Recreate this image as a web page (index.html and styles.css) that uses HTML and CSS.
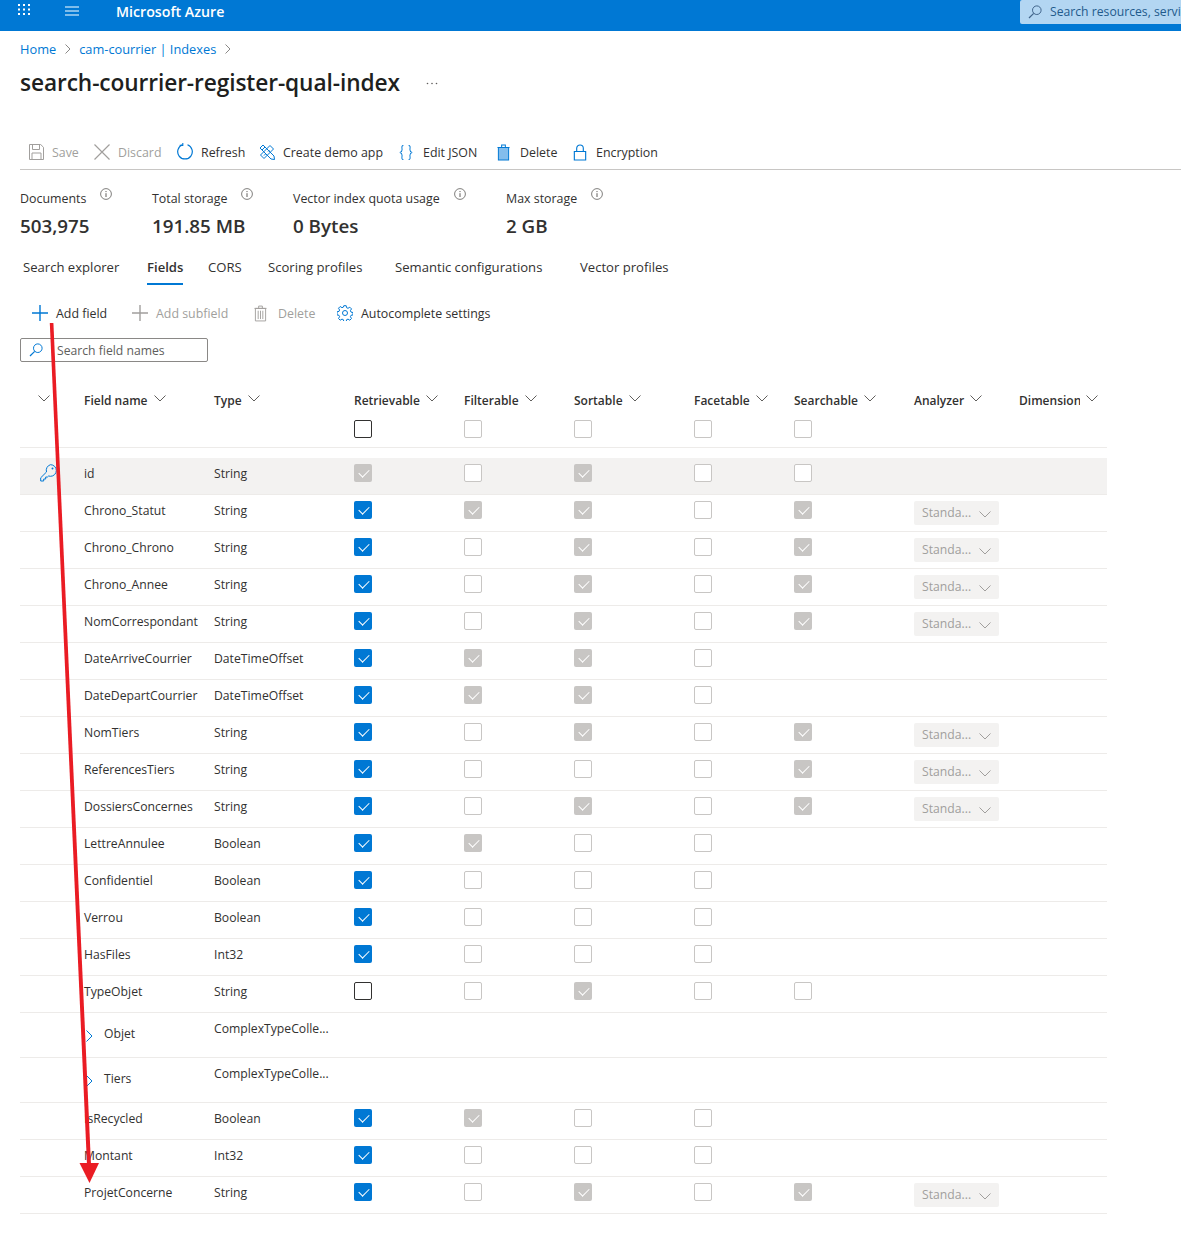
FILE: index.html
```html
<!DOCTYPE html>
<html lang="en">
<head>
<meta charset="utf-8">
<title>search-courrier-register-qual-index - Microsoft Azure</title>
<link rel="stylesheet" href="styles.css">
</head>
<body>
<svg class="sprite" aria-hidden="true">
  <symbol id="chev" viewBox="0 0 12 7"><path d="M.5.5 6 6 11.500.5" fill="none" stroke="currentColor"/></symbol>
  <symbol id="search" viewBox="0 0 14 14"><circle cx="8.800" cy="5.200" r="4.300" fill="none" stroke="currentColor"/><path d="M5.700 8.300 1 13" fill="none" stroke="currentColor" stroke-width="1.200"/></symbol>
  <symbol id="info" viewBox="0 0 12 12"><circle cx="6" cy="6" r="5.400" fill="none" stroke="currentColor" stroke-width=".8"/><path d="M6 5.200V9M6 3v1.100" fill="none" stroke="currentColor"/></symbol>
  <symbol id="plus" viewBox="0 0 18 18"><path d="M9 1v16M1 9h16" fill="none" stroke="currentColor" stroke-width="1.400"/></symbol>
  <symbol id="trash" viewBox="0 0 14 18"><path d="M1.500 3.500h11V17h-11zM.5 3.500h13M5 3.500V1h4v2.500" fill="none" stroke="currentColor"/><path d="M4.500 6v9M7 6v9M9.500 6v9" fill="none" stroke="currentColor"/></symbol>
</svg>

<header class="topbar">
  <svg class="waffle" width="12" height="11" viewBox="0 0 12 11"><g fill="#fff"><rect width="2" height="2"/><rect x="5" width="2" height="2"/><rect x="10" width="2" height="2"/><rect y="4.500" width="2" height="2"/><rect x="5" y="4.500" width="2" height="2"/><rect x="10" y="4.500" width="2" height="2"/><rect y="9" width="2" height="2"/><rect x="5" y="9" width="2" height="2"/><rect x="10" y="9" width="2" height="2"/></g></svg>
  <svg class="burger" width="14" height="10" viewBox="0 0 14 10"><path d="M0 1h14M0 5h14M0 9h14" stroke="#a9d3f2" stroke-width="1.600"/></svg>
  <span class="brand">Microsoft Azure</span>
  <div class="globalsearch">
    <svg class="gs-icon"><use href="#search"/></svg>
    <span class="gs-text">Search resources, services, and docs (G+/)</span>
  </div>
</header>

<main class="page">
  <nav class="crumbs">
    <a>Home</a><svg class="crumb-sep" width="6" height="10" viewBox="0 0 6 10"><path d="M.5.500 5 5 .5 9.500" fill="none" stroke="#8a8886"/></svg>
    <a>cam-courrier | Indexes</a><svg class="crumb-sep" width="6" height="10" viewBox="0 0 6 10"><path d="M.5.500 5 5 .5 9.500" fill="none" stroke="#8a8886"/></svg>
  </nav>
  <div class="titlerow">
    <h1>search-courrier-register-qual-index</h1>
    <svg class="more" width="12" height="3" viewBox="0 0 12 3" aria-label="More"><g fill="#605e5c"><circle cx="1.500" cy="1.500" r=".8"/><circle cx="6" cy="1.500" r=".8"/><circle cx="10.500" cy="1.500" r=".8"/></g></svg>
  </div>

  <div class="toolbar">
    <span class="tool off"><svg width="15" height="16" viewBox="0 0 15 16"><path d="M.5.500h11.200l2.800 2.800v12.200H.5zM3.500.500v5h7v-5M3 15.500V9h9v6.500" fill="none" stroke="#a19f9d"/></svg>Save</span>
    <span class="tool off"><svg width="16" height="16" viewBox="0 0 16 16"><path d="M.5.500l15 15M15.500.500l-15 15" fill="none" stroke="#a19f9d" stroke-width="1.200"/></svg>Discard</span>
    <span class="tool"><svg width="16" height="18" viewBox="0 1.500 16 18"><path d="M5.500 3.300A7.300 7.300 0 1 0 10.500 3.300" fill="none" stroke="#0078d4" stroke-width="1.200"/><path d="M5.800.500v3.400H2.700" fill="none" stroke="#0078d4" stroke-width="1.100"/></svg>Refresh</span>
    <span class="tool"><svg width="16" height="16" viewBox="0 0 16 16" fill="none" stroke="#0078d4"><path d="M1 4 4 1l11 11 .5 3.500-3.500-.5zM3 6l3-3"/><path d="M11 1.500 14.500 5 5 14.500 1.500 11zM5 11.500l1.500-1.500M9 7.500l1.500-1.500"/></svg>Create demo app</span>
    <span class="tool brace"><svg width="14" height="15" viewBox="0 0 16 16" preserveAspectRatio="none" fill="none" stroke="#0078d4" stroke-width="1.100"><path d="M5 .5C2.500.5 3.500 3 3.500 5S3 7.500 1 8c2 .5 2.500 1 2.500 3s-1 4.500 1.500 4.500M11 .5c2.500 0 1.500 2.500 1.500 4.500s.5 2.500 2.500 3c-2 .5-2.500 1-2.500 3s1 4.500-1.500 4.500"/></svg>Edit JSON</span>
    <span class="tool trashbtn"><svg width="13" height="17" viewBox="0 0 14 18"><rect x="2" y="4" width="10" height="13" fill="#83bdec"/><path d="M1.500 3.500h11V17h-11zM.5 3.500h13M5 3.500V1h4v2.500" fill="none" stroke="#0078d4" stroke-width="1.100"/></svg>Delete</span>
    <span class="tool lock"><svg width="14" height="17" viewBox="0 0 14 18" fill="none" stroke="#0078d4" stroke-width="1.200"><path d="M1 8h12v9H1zM3.500 8V4.500a3.500 3.500 0 0 1 7 0V8"/></svg>Encryption</span>
  </div>

  <section class="stats">
    <div><div class="stat-label">Documents<svg class="info"><use href="#info"/></svg></div><div class="stat-value">503,975</div></div>
    <div><div class="stat-label">Total storage<svg class="info"><use href="#info"/></svg></div><div class="stat-value">191.85 MB</div></div>
    <div><div class="stat-label">Vector index quota usage<svg class="info"><use href="#info"/></svg></div><div class="stat-value">0 Bytes</div></div>
    <div><div class="stat-label">Max storage<svg class="info"><use href="#info"/></svg></div><div class="stat-value">2 GB</div></div>
  </section>

  <nav class="tabs">
    <span class="tab">Search explorer</span>
    <span class="tab active">Fields</span>
    <span class="tab">CORS</span>
    <span class="tab">Scoring profiles</span>
    <span class="tab">Semantic configurations</span>
    <span class="tab">Vector profiles</span>
  </nav>

  <div class="subtools">
    <span class="tool"><svg class="blue" width="18" height="18"><use href="#plus"/></svg>Add field</span>
    <span class="tool off"><svg class="grey" width="18" height="18"><use href="#plus"/></svg>Add subfield</span>
    <span class="tool off trashoff"><svg class="grey" width="13" height="17"><use href="#trash"/></svg>Delete</span>
    <span class="tool gear"><svg width="16" height="16" viewBox="0 0 16 16" fill="none" stroke="#0078d4"><circle cx="8" cy="8" r="2.500"/><path d="M6.800.7h2.400l.4 2 1.400.6 1.800-1.100 1.700 1.700-1.100 1.800.6 1.400 2 .4v2.400l-2 .4-.6 1.400 1.100 1.800-1.700 1.700-1.800-1.100-1.400.6-.4 2H6.800l-.4-2-1.400-.6-1.800 1.100-1.700-1.700 1.100-1.800-.6-1.400-2-.4V6.800l2-.4.6-1.400-1.100-1.800 1.700-1.700L5 2.700l1.400-.6z"/></svg>Autocomplete settings</span>
  </div>

  <div class="fieldsearch">
    <svg class="fs-icon"><use href="#search"/></svg>
    <span>Search field names</span>
  </div>

  <section class="fields">
    <div class="thead">
      <div class="th"><svg class="chev"><use href="#chev"/></svg></div>
      <div class="th"><span>Field name</span><svg class="chev"><use href="#chev"/></svg></div>
      <div class="th"><span>Type</span><svg class="chev"><use href="#chev"/></svg></div>
      <div class="th"><span>Retrievable</span><svg class="chev"><use href="#chev"/></svg></div>
      <div class="th"><span>Filterable</span><svg class="chev"><use href="#chev"/></svg></div>
      <div class="th"><span>Sortable</span><svg class="chev"><use href="#chev"/></svg></div>
      <div class="th"><span>Facetable</span><svg class="chev"><use href="#chev"/></svg></div>
      <div class="th"><span>Searchable</span><svg class="chev"><use href="#chev"/></svg></div>
      <div class="th"><span>Analyzer</span><svg class="chev"><use href="#chev"/></svg></div>
      <div class="th"><span class="clip">Dimension</span><svg class="chev"><use href="#chev"/></svg></div>
      <div></div><div></div><div></div>
      <div><i class="cb dark"></i></div><div><i class="cb"></i></div><div><i class="cb"></i></div><div><i class="cb"></i></div><div><i class="cb"></i></div><div></div><div></div>
    </div>

    <div class="row key">
      <div><svg class="keyicon" width="17" height="18" viewBox="0 0 17 18" fill="none" stroke="#0078d4"><path d="M10.500.7a5.800 5.800 0 0 1 0 11.600c-.7 0-1.300-.1-1.900-.3L7.500 13H5.700v2H3.700v2H.7v-3.200L6.500 8a5.800 5.800 0 0 1 4-7.300z"/><circle cx="12.500" cy="4.500" r="1" fill="#0078d4" stroke="none"/></svg></div>
      <div>id</div><div>String</div>
      <div><i class="cb dis"></i></div><div><i class="cb"></i></div><div><i class="cb dis"></i></div><div><i class="cb"></i></div><div><i class="cb"></i></div><div></div><div></div>
    </div>
    <div class="row"><div></div><div>Chrono_Statut</div><div>String</div><div><i class="cb on"></i></div><div><i class="cb dis"></i></div><div><i class="cb dis"></i></div><div><i class="cb"></i></div><div><i class="cb dis"></i></div><div><span class="drop">Standa...<svg class="chev"><use href="#chev"/></svg></span></div><div></div></div>
    <div class="row"><div></div><div>Chrono_Chrono</div><div>String</div><div><i class="cb on"></i></div><div><i class="cb"></i></div><div><i class="cb dis"></i></div><div><i class="cb"></i></div><div><i class="cb dis"></i></div><div><span class="drop">Standa...<svg class="chev"><use href="#chev"/></svg></span></div><div></div></div>
    <div class="row"><div></div><div>Chrono_Annee</div><div>String</div><div><i class="cb on"></i></div><div><i class="cb"></i></div><div><i class="cb dis"></i></div><div><i class="cb"></i></div><div><i class="cb dis"></i></div><div><span class="drop">Standa...<svg class="chev"><use href="#chev"/></svg></span></div><div></div></div>
    <div class="row"><div></div><div>NomCorrespondant</div><div>String</div><div><i class="cb on"></i></div><div><i class="cb"></i></div><div><i class="cb dis"></i></div><div><i class="cb"></i></div><div><i class="cb dis"></i></div><div><span class="drop">Standa...<svg class="chev"><use href="#chev"/></svg></span></div><div></div></div>
    <div class="row"><div></div><div>DateArriveCourrier</div><div>DateTimeOffset</div><div><i class="cb on"></i></div><div><i class="cb dis"></i></div><div><i class="cb dis"></i></div><div><i class="cb"></i></div><div></div><div></div><div></div></div>
    <div class="row"><div></div><div>DateDepartCourrier</div><div>DateTimeOffset</div><div><i class="cb on"></i></div><div><i class="cb dis"></i></div><div><i class="cb dis"></i></div><div><i class="cb"></i></div><div></div><div></div><div></div></div>
    <div class="row"><div></div><div>NomTiers</div><div>String</div><div><i class="cb on"></i></div><div><i class="cb"></i></div><div><i class="cb dis"></i></div><div><i class="cb"></i></div><div><i class="cb dis"></i></div><div><span class="drop">Standa...<svg class="chev"><use href="#chev"/></svg></span></div><div></div></div>
    <div class="row"><div></div><div>ReferencesTiers</div><div>String</div><div><i class="cb on"></i></div><div><i class="cb"></i></div><div><i class="cb"></i></div><div><i class="cb"></i></div><div><i class="cb dis"></i></div><div><span class="drop">Standa...<svg class="chev"><use href="#chev"/></svg></span></div><div></div></div>
    <div class="row"><div></div><div>DossiersConcernes</div><div>String</div><div><i class="cb on"></i></div><div><i class="cb"></i></div><div><i class="cb dis"></i></div><div><i class="cb"></i></div><div><i class="cb dis"></i></div><div><span class="drop">Standa...<svg class="chev"><use href="#chev"/></svg></span></div><div></div></div>
    <div class="row"><div></div><div>LettreAnnulee</div><div>Boolean</div><div><i class="cb on"></i></div><div><i class="cb dis"></i></div><div><i class="cb"></i></div><div><i class="cb"></i></div><div></div><div></div><div></div></div>
    <div class="row"><div></div><div>Confidentiel</div><div>Boolean</div><div><i class="cb on"></i></div><div><i class="cb"></i></div><div><i class="cb"></i></div><div><i class="cb"></i></div><div></div><div></div><div></div></div>
    <div class="row"><div></div><div>Verrou</div><div>Boolean</div><div><i class="cb on"></i></div><div><i class="cb"></i></div><div><i class="cb"></i></div><div><i class="cb"></i></div><div></div><div></div><div></div></div>
    <div class="row"><div></div><div>HasFiles</div><div>Int32</div><div><i class="cb on"></i></div><div><i class="cb"></i></div><div><i class="cb"></i></div><div><i class="cb"></i></div><div></div><div></div><div></div></div>
    <div class="row"><div></div><div>TypeObjet</div><div>String</div><div><i class="cb dark"></i></div><div><i class="cb"></i></div><div><i class="cb dis"></i></div><div><i class="cb"></i></div><div><i class="cb"></i></div><div></div><div></div></div>
    <div class="row complex"><div></div><div class="cname"><svg class="expand" width="7" height="12" viewBox="0 0 7 12"><path d="M.5.500 6 6 .5 11.500" fill="none" stroke="#0078d4"/></svg>Objet</div><div class="ctype">ComplexTypeColle...</div><div></div><div></div><div></div><div></div><div></div><div></div><div></div></div>
    <div class="row complex"><div></div><div class="cname"><svg class="expand" width="7" height="12" viewBox="0 0 7 12"><path d="M.5.500 6 6 .5 11.500" fill="none" stroke="#0078d4"/></svg>Tiers</div><div class="ctype">ComplexTypeColle...</div><div></div><div></div><div></div><div></div><div></div><div></div><div></div></div>
    <div class="row"><div></div><div>IsRecycled</div><div>Boolean</div><div><i class="cb on"></i></div><div><i class="cb dis"></i></div><div><i class="cb"></i></div><div><i class="cb"></i></div><div></div><div></div><div></div></div>
    <div class="row"><div></div><div>Montant</div><div>Int32</div><div><i class="cb on"></i></div><div><i class="cb"></i></div><div><i class="cb"></i></div><div><i class="cb"></i></div><div></div><div></div><div></div></div>
    <div class="row"><div></div><div>ProjetConcerne</div><div>String</div><div><i class="cb on"></i></div><div><i class="cb"></i></div><div><i class="cb dis"></i></div><div><i class="cb"></i></div><div><i class="cb dis"></i></div><div><span class="drop">Standa...<svg class="chev"><use href="#chev"/></svg></span></div><div></div></div>
  </section>
</main>

<svg class="annotation" width="1181" height="1243" viewBox="0 0 1181 1243" aria-hidden="true">
  <path d="M49.800 323h3.600L91 1165h-4z" fill="#ea1c24"/>
  <path d="M79.500 1163h19.500l-9.500 20z" fill="#ea1c24"/>
</svg>
</body>
</html>
```
FILE: styles.css
```css
* { box-sizing: border-box; }
html, body { margin: 0; padding: 0; }
body {
  width: 1181px;
  height: 1243px;
  position: relative;
  overflow: hidden;
  background: #fff;
  color: #323130;
  font-family: "Open Sans", "Noto Sans", "Liberation Sans", sans-serif;
  font-size: 12.2px;
  line-height: 18px;
}
.sprite { position: absolute; width: 0; height: 0; }

.topbar {
  height: 31px;
  background: #0078d4;
  display: flex;
  align-items: flex-start;
  overflow: hidden;
}
.waffle { margin: 4px 0 0 18px; flex: none; }
.burger { margin: 6px 0 0 35px; flex: none; }
.brand { margin: 3px 0 0 37px; color: #fff; font-size: 14.200px; font-weight: 600; white-space: nowrap; }
.globalsearch {
  margin-left: auto;
  width: 161px;
  height: 24px;
  background: #b3d6f2;
  border-radius: 2px 0 0 2px;
  display: flex;
  align-items: center;
  padding-left: 8px;
  overflow: hidden;
  flex: none;
}
.gs-icon { width: 14px; height: 14px; color: #40648a; flex: none; }
.gs-text { margin-left: 8px; color: #1f5a8c; white-space: nowrap; }

.page { padding-left: 20px; }
.crumbs { margin-top: 9px; height: 18px; display: flex; align-items: center; color: #0078d4; font-size: 12.800px; }
.crumb-sep { margin: 0 8px 0 9px; }
.titlerow { margin-top: 9px; height: 32px; display: flex; align-items: center; }
h1 { margin: 0; font-size: 22.700px; line-height: 32px; font-weight: 600; color: #201f1e; letter-spacing: -.1px; white-space: nowrap; }
.more { margin: 0 0 0 26px; flex: none; }

.toolbar {
  margin-top: 36px;
  height: 35px;
  padding: 0 0 0 9px;
  display: grid;
  grid-template-columns: 65px 83px 82px 140px 98px 76px 1fr;
  align-items: center;
  border-bottom: 1px solid #c8c6c4;
  font-size: 12.400px;
}
.tool { display: flex; align-items: center; gap: 8px; white-space: nowrap; padding-top: 2px; }
.tool svg { flex: none; margin-top: -2px; }
.tool.off { color: #a19f9d; }
.tool.brace { gap: 10px; }
.tool.trashbtn { gap: 10px; }
.tool.lock { gap: 9px; }

.stats {
  margin-top: 19px;
  display: grid;
  grid-template-columns: 132px 141px 213px 1fr;
  font-size: 12.400px;
}
.stat-label { display: flex; height: 18px; line-height: 20px; white-space: nowrap; }
.info { width: 12px; height: 12px; margin: -1px 0 0 14px; color: #605e5c; }
.stat-value { margin-top: 5px; height: 28px; font-size: 18.800px; line-height: 28px; font-weight: 600; white-space: nowrap; }

.tabs {
  margin-top: 18px;
  padding-left: 3px;
  display: grid;
  grid-template-columns: 124px 61px 60px 127px 185px 1fr;
  font-size: 13.100px;
}
.tab { height: 27px; line-height: 18px; white-space: nowrap; justify-self: start; }
.tab.active { font-weight: 600; border-bottom: 2px solid #0078d4; }

.subtools {
  margin-top: 18px;
  height: 18px;
  padding-left: 11px;
  display: grid;
  grid-template-columns: 100px 122px 84px 1fr;
  align-items: center;
  font-size: 12.400px;
}
.subtools .tool { gap: 7px; }
.subtools .tool.trashoff { gap: 11px; margin-left: 1px; }
.subtools .tool.gear { gap: 8px; }
.blue { color: #0078d4; }
.grey { color: #a19f9d; }

.fieldsearch {
  margin-top: 17px;
  width: 188px;
  height: 24px;
  border: 1px solid #8a8886;
  border-radius: 2px;
  display: flex;
  align-items: center;
  padding-left: 8px;
  color: #605e5c;
}
.fieldsearch span { padding-top: 2px; }
.fs-icon { width: 14px; height: 14px; color: #0078d4; margin-right: 14px; flex: none; }

.fields { margin-top: 29px; width: 1087px; }
.thead, .row {
  display: grid;
  grid-template-columns: 64px 130px 140px 110px 110px 120px 100px 120px 105px 88px;
}
.thead {
  grid-template-rows: 18px 18px;
  row-gap: 11px;
  padding-bottom: 9px;
  border-bottom: 1px solid #edebe9;
  margin-bottom: 10px;
}
.th { display: flex; align-items: center; gap: 6px; font-weight: 600; font-size: 12px; white-space: nowrap; padding-top: 2px; }
.th:first-child { padding-left: 18px; }
.th .chev { margin-top: -5px; }
.chev { width: 12px; height: 7px; color: #605e5c; flex: none; }
.clip { display: block; width: 61px; overflow: hidden; }

.row {
  height: 37px;
  padding-top: 6px;
  border-bottom: 1px solid #edebe9;
  line-height: 20px;
  white-space: nowrap;
}
.row.key { background: #f3f2f1; }
.keyicon { display: block; margin: 0 0 0 20px; }

.cb {
  display: block;
  position: relative;
  width: 18px;
  height: 18px;
  background: #fff;
  border: 1px solid #c8c6c4;
  border-radius: 2px;
}
.cb.dark { border-color: #323130; }
.cb.on, .cb.dis { border-color: transparent; }
.cb.on { background: #0078d4; }
.cb.dis { background: #c8c6c4; }
.cb.on::after, .cb.dis::after {
  content: "";
  position: absolute;
  left: 5.500px;
  top: 2px;
  width: 5px;
  height: 9px;
  border: solid #fff;
  border-width: 0 1.100px 1.100px 0;
  transform: rotate(45deg);
}

.drop {
  display: flex;
  align-items: center;
  justify-content: space-between;
  width: 85px;
  height: 24px;
  padding: 0 8px;
  background: #f3f2f1;
  border-radius: 2px;
  color: #a19f9d;
}
.drop .chev { margin-top: 2px; color: #a19f9d; }

.row.complex { height: 45px; padding-top: 0; }
.cname { display: flex; align-items: center; height: 44px; padding-left: 2px; margin-top: -1px; }
.expand { margin: 4px 11px 0 0; flex: none; }
.ctype { padding-top: 6px; }

.annotation { position: absolute; left: 0; top: 0; pointer-events: none; }
```
